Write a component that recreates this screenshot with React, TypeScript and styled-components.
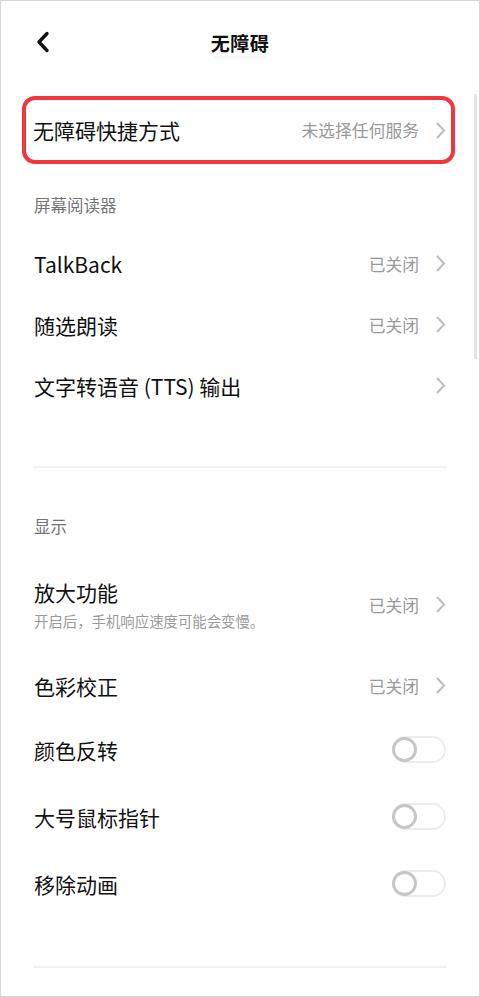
import React, { FC } from 'react'
import styled, { createGlobalStyle } from 'styled-components'

const colors = {
    text: '#111111',
    sub: '#999999',
    label: '#747474',
    chevron: '#bdbdbd',
    divider: '#f1f1f1',
    red: '#f2363d',
    frame: '#d6d6d6',
}

const fontStack = `'Noto Sans CJK SC', 'Noto Sans', sans-serif`

const GlobalStyle = createGlobalStyle`
    html, body {
        margin: 0;
        padding: 0;
        background: #fff;
    }
    body {
        font-family: ${fontStack};
        -webkit-font-smoothing: antialiased;
    }
`

const Page = styled.div`
    position: relative;
    box-sizing: border-box;
    width: 480px;
    height: 997px;
    overflow: hidden;
    background: #fff;
    border: 1px solid ${colors.frame};
    color: ${colors.text};
`

const ScrollThumb = styled.div`
    position: absolute;
    right: 2px;
    top: 93px;
    width: 3px;
    height: 265px;
    background: #e4e4e4;
`

const Header = styled.header`
    position: relative;
    height: 84px;
    display: flex;
    align-items: center;
    justify-content: center;
`

const BackButton = styled.div`
    position: absolute;
    left: 32px;
    top: 28px;
    width: 20px;
    height: 26px;
    display: flex;
    align-items: center;
    justify-content: center;
`

const Title = styled.h1`
    margin: 0;
    font-size: 19px;
    font-weight: 700;
    line-height: 26px;
    letter-spacing: 0.5px;
    box-shadow: 0 5px 3px -3px rgba(0, 0, 0, 0.05);
`

const Highlight = styled.div`
    margin: 11px 24px 0 21px;
    height: 68px;
    box-sizing: border-box;
    border: 4px solid ${colors.red};
    border-radius: 13px;
    padding: 0 5px 0 7px;
    display: flex;
    align-items: center;
`

const Section = styled.section`
    padding: 0 33px;
`

const SectionLabel = styled.div<{ $top: number }>`
    padding-top: ${(p) => p.$top}px;
    margin-bottom: 16px;
    font-size: 16.5px;
    line-height: 24px;
    color: ${colors.label};
`

const Row = styled.div<{ $height?: number; $pad?: number }>`
    display: flex;
    align-items: center;
    min-height: ${(p) => p.$height || 61}px;
    padding: ${(p) => p.$pad || 0}px 0;
    box-sizing: border-box;
    width: 100%;
`

const RowText = styled.div`
    flex: 1;
    display: flex;
    flex-direction: column;
    gap: 5px;
`

const RowTitle = styled.div`
    font-size: 21px;
    line-height: 28px;
    color: ${colors.text};
`

const RowDesc = styled.div`
    font-size: 14.4px;
    line-height: 20px;
    color: ${colors.sub};
`

const RowValue = styled.div`
    font-size: 16.8px;
    line-height: 24px;
    color: ${colors.sub};
    margin-right: 16px;
`

const Divider = styled.div<{ $top: number }>`
    margin: ${(p) => p.$top}px 32px 0;
    height: 2px;
    background: ${colors.divider};
`

const SwitchTrack = styled.div`
    position: relative;
    width: 54px;
    height: 27px;
    box-sizing: border-box;
    border: 2px solid #ececec;
    border-radius: 14px;
    background: #fff;
`

const SwitchKnob = styled.div`
    position: absolute;
    left: -2px;
    top: -1px;
    width: 25px;
    height: 25px;
    box-sizing: border-box;
    border: 3px solid #c6c6c6;
    border-radius: 50%;
    background: #fff;
`

const Chevron: FC = () => (
    <svg width="11" height="19" viewBox="0 0 11 19">
        <path d="M2 2 L9 9.5 L2 17" fill="none" stroke={colors.chevron} strokeWidth="2" />
    </svg>
)

const Switch: FC = () => (
    <SwitchTrack>
        <SwitchKnob />
    </SwitchTrack>
)

type Item = {
    title: string
    desc?: string
    value?: string
    toggle?: boolean
}

const readerItems: Item[] = [
    { title: 'TalkBack', value: '已关闭' },
    { title: '随选朗读', value: '已关闭' },
    { title: '文字转语音 (TTS) 输出' },
]

const displayItems: Item[] = [
    { title: '放大功能', desc: '开启后，手机响应速度可能会变慢。', value: '已关闭' },
    { title: '色彩校正', value: '已关闭' },
    { title: '颜色反转', toggle: true },
    { title: '大号鼠标指针', toggle: true },
    { title: '移除动画', toggle: true },
]

const SettingRow: FC<{ item: Item }> = ({ item }) => (
    <Row $height={item.toggle ? 67 : 61} $pad={item.desc ? 24 : 0}>
        <RowText>
            <RowTitle>{item.title}</RowTitle>
            {item.desc && <RowDesc>{item.desc}</RowDesc>}
        </RowText>
        {item.value && <RowValue>{item.value}</RowValue>}
        {item.toggle ? <Switch /> : <Chevron />}
    </Row>
)

const App: FC = () => {
    return (
        <Page>
            <GlobalStyle />
            <Header>
                <BackButton>
                    <svg width="16" height="22" viewBox="0 0 16 22">
                        <path
                            d="M12 2.5 L4 11 L12 19.5"
                            fill="none"
                            stroke="#111"
                            strokeWidth="3.4"
                            strokeLinecap="round"
                            strokeLinejoin="round"
                        />
                    </svg>
                </BackButton>
                <Title>无障碍</Title>
            </Header>

            <Highlight>
                <RowText>
                    <RowTitle>无障碍快捷方式</RowTitle>
                </RowText>
                <RowValue>未选择任何服务</RowValue>
                <Chevron />
            </Highlight>

            <Section>
                <SectionLabel $top={29}>屏幕阅读器</SectionLabel>
                {readerItems.map((item) => (
                    <SettingRow key={item.title} item={item} />
                ))}
            </Section>

            <Divider $top={50} />

            <Section>
                <SectionLabel $top={46}>显示</SectionLabel>
                {displayItems.map((item) => (
                    <SettingRow key={item.title} item={item} />
                ))}
            </Section>

            <Divider $top={49} />

            <ScrollThumb />
        </Page>
    )
}

export default App
